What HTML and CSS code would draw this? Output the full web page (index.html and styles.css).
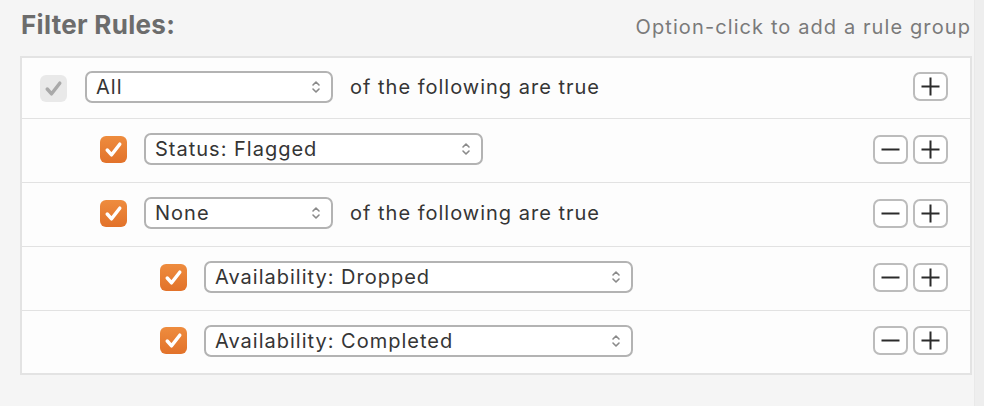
FILE: index.html
```html
<!DOCTYPE html>
<html>
<head>
<meta charset="utf-8">
<link rel="stylesheet" href="styles.css">
</head>
<body>
<div class="window">
  <div class="main">
    <div class="header">
      <div class="title">Filter Rules:</div>
      <div class="hint">Option-click to add a rule group</div>
    </div>
    <div class="table">
      <div class="row first">
        <span class="check disabled"><svg viewBox="0 0 28 28"><path d="M7.5 14.5 L12 19.5 L20.5 8.5" /></svg></span>
        <span class="popup w-all"><span class="label">All</span><svg class="chev" viewBox="0 0 10 16"><path d="M2 6 L5 3 L8 6 M2 10 L5 13 L8 10"/></svg></span>
        <span class="text">of the following are true</span>
        <span class="buttons"><span class="btn"><svg viewBox="0 0 35 29"><path d="M8.5 14.5 H26.5 M17.5 5.5 V23.5"/></svg></span></span>
      </div>
      <div class="row lvl1">
        <span class="check"><svg viewBox="0 0 28 28"><path d="M7.5 14.5 L12 19.5 L20.5 8.5" /></svg></span>
        <span class="popup w-status"><span class="label">Status: Flagged</span><svg class="chev" viewBox="0 0 10 16"><path d="M2 6 L5 3 L8 6 M2 10 L5 13 L8 10"/></svg></span>
        <span class="buttons"><span class="btn"><svg viewBox="0 0 35 29"><path d="M8.5 14.5 H26.5"/></svg></span><span class="btn"><svg viewBox="0 0 35 29"><path d="M8.5 14.5 H26.5 M17.5 5.5 V23.5"/></svg></span></span>
      </div>
      <div class="row lvl1">
        <span class="check"><svg viewBox="0 0 28 28"><path d="M7.5 14.5 L12 19.5 L20.5 8.5" /></svg></span>
        <span class="popup w-none"><span class="label">None</span><svg class="chev" viewBox="0 0 10 16"><path d="M2 6 L5 3 L8 6 M2 10 L5 13 L8 10"/></svg></span>
        <span class="text">of the following are true</span>
        <span class="buttons"><span class="btn"><svg viewBox="0 0 35 29"><path d="M8.5 14.5 H26.5"/></svg></span><span class="btn"><svg viewBox="0 0 35 29"><path d="M8.5 14.5 H26.5 M17.5 5.5 V23.5"/></svg></span></span>
      </div>
      <div class="row lvl2">
        <span class="check"><svg viewBox="0 0 28 28"><path d="M7.5 14.5 L12 19.5 L20.5 8.5" /></svg></span>
        <span class="popup w-avail"><span class="label">Availability: Dropped</span><svg class="chev" viewBox="0 0 10 16"><path d="M2 6 L5 3 L8 6 M2 10 L5 13 L8 10"/></svg></span>
        <span class="buttons"><span class="btn"><svg viewBox="0 0 35 29"><path d="M8.5 14.5 H26.5"/></svg></span><span class="btn"><svg viewBox="0 0 35 29"><path d="M8.5 14.5 H26.5 M17.5 5.5 V23.5"/></svg></span></span>
      </div>
      <div class="row lvl2 last">
        <span class="check"><svg viewBox="0 0 28 28"><path d="M7.5 14.5 L12 19.5 L20.5 8.5" /></svg></span>
        <span class="popup w-avail"><span class="label">Availability: Completed</span><svg class="chev" viewBox="0 0 10 16"><path d="M2 6 L5 3 L8 6 M2 10 L5 13 L8 10"/></svg></span>
        <span class="buttons"><span class="btn"><svg viewBox="0 0 35 29"><path d="M8.5 14.5 H26.5"/></svg></span><span class="btn"><svg viewBox="0 0 35 29"><path d="M8.5 14.5 H26.5 M17.5 5.5 V23.5"/></svg></span></span>
      </div>
    </div>
  </div>
  <div class="strip"></div>
</div>
</body>
</html>
```
FILE: styles.css
```css
html, body {
  margin: 0;
  padding: 0;
  background: #f5f5f5;
}
body {
  width: 984px;
  height: 406px;
  overflow: hidden;
  font-family: Inter, "Noto Sans", sans-serif;
  color: #333;
}
.window {
  display: flex;
  height: 406px;
}
.main {
  width: 953px;
  padding-left: 20px;
}
.strip {
  margin-left: 2px;
  width: 9px;
  background: #eeeeee;
  border-left: 1px solid #e9e9e9;
}
.header {
  display: flex;
  justify-content: space-between;
  align-items: baseline;
  height: 56px;
  box-sizing: border-box;
  padding-top: 9px;
}
.title {
  font-weight: 700;
  font-size: 26px;
  letter-spacing: 0.3px;
  color: #6c6c6c;
  padding-left: 1px;
  line-height: 32px;
}
.hint {
  font-size: 20px;
  letter-spacing: 1.1px;
  color: #7a7a7a;
  padding-right: 1px;
}
.table {
  border: 2px solid #e3e3e3;
  background: #fdfdfd;
}
.row {
  display: flex;
  align-items: center;
  border-bottom: 1px solid #e2e2e2;
  padding: 0 22px 3px 18px;
  box-sizing: border-box;
  height: 64px;
}
.row.first { height: 61px; }
.row.last { border-bottom: none; height: 62px; }
.row.lvl1 { padding-left: 78px; }
.row.lvl2 { padding-left: 138px; }
.check {
  width: 27px;
  height: 27px;
  border-radius: 6px;
  background: linear-gradient(#ee8c3e, #e2722a);
  flex: none;
  display: flex;
}
.check svg {
  width: 27px;
  height: 27px;
  fill: none;
  stroke: #fff;
  stroke-width: 3.6;
  stroke-linecap: round;
  stroke-linejoin: round;
}
.check.disabled {
  background: #e9e9e9;
  margin-top: 4px;
}
.check.disabled svg { stroke: #a9a9a9; }
.popup {
  margin-left: 18px;
  height: 32px;
  box-sizing: border-box;
  border: 2px solid #b3b3b3;
  border-radius: 7px;
  background: #fff;
  display: flex;
  align-items: center;
  justify-content: space-between;
  padding: 0 10px 0 9px;
  font-size: 20px;
  letter-spacing: 1px;
  color: #353535;
  flex: none;
}
.row.lvl1 .popup, .row.lvl2 .popup { margin-left: 17px; }
.w-all { width: 248px; }
.w-status { width: 339px; }
.w-none { width: 189px; }
.w-avail { width: 429px; }
.chev {
  width: 10px;
  height: 16px;
  fill: none;
  stroke: #8a8a8a;
  stroke-width: 1.6;
  stroke-linecap: round;
  stroke-linejoin: round;
}
.text {
  margin-left: 17px;
  font-size: 20px;
  letter-spacing: 1px;
  color: #353535;
}
.buttons {
  margin-left: auto;
  display: flex;
  gap: 5px;
}
.btn {
  width: 35px;
  height: 29px;
  box-sizing: border-box;
  border: 2px solid #bcbcbc;
  border-radius: 7px;
  background: #fff;
  display: flex;
  align-items: center;
  justify-content: center;
}
.btn svg {
  width: 35px;
  height: 29px;
  flex: none;
  fill: none;
  stroke: #2b2b2b;
  stroke-width: 2;
}
```
